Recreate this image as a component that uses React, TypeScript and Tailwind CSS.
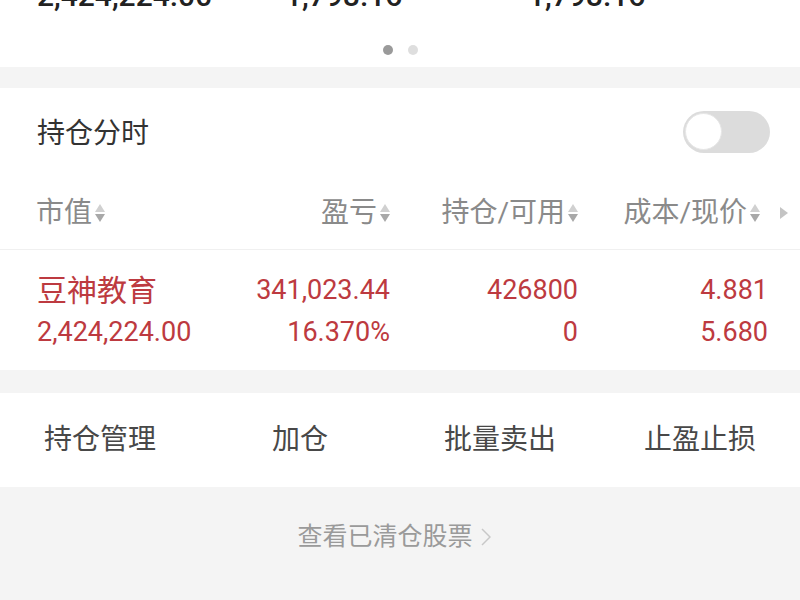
import React from "react";

const FONT = { fontFamily: "Roboto, 'Noto Sans CJK SC', sans-serif" };

function SortIcon() {
  return (
    <span className="ml-[3px] inline-flex flex-col items-center gap-[2px]">
      <svg width="10" height="8" viewBox="0 0 10 8">
        <polygon points="5,0 10,8 0,8" fill="#d0d0d0" />
      </svg>
      <svg width="10" height="8" viewBox="0 0 10 8">
        <polygon points="0,0 10,0 5,8" fill="#a8a8a8" />
      </svg>
    </span>
  );
}

export default function App() {
  return (
    <div className="w-[800px] h-[600px] overflow-hidden bg-[#f4f4f4]" style={FONT}>
      {/* top carousel card remainder */}
      <div className="h-[67px] bg-white overflow-hidden">
        <div className="-mt-[19px] flex h-[30px] items-center pl-[37px] text-[30px] leading-[30px] font-medium text-[#222]">
          <span className="w-[248px]">2,424,224.00</span>
          <span className="w-[243px]">1,798.16</span>
          <span>1,798.16</span>
        </div>
        <div className="mt-[34px] flex justify-center gap-[15px]">
          <span className="h-[10px] w-[10px] rounded-full bg-[#9a9a9a]" />
          <span className="h-[10px] w-[10px] rounded-full bg-[#dedede]" />
        </div>
      </div>

      <div className="h-[21px]" />

      {/* 持仓分时 */}
      <div className="h-[87px] bg-white flex items-center justify-between pl-[37px] pr-[30px]">
        <span className="text-[28px] leading-[28px] pt-[4px] text-[#333]">持仓分时</span>
        <div className="h-[42px] w-[87px] rounded-full bg-[#dcdcdc] flex items-center pl-[2px]">
          <div className="h-[37px] w-[37px] rounded-full bg-white border border-[#e6e6e6]" />
        </div>
      </div>

      {/* header */}
      <div className="h-[75px] bg-white flex items-center pl-[36px] pt-[2px] border-b border-[#f0f0f0] text-[28px] text-[#8a8a8a]">
        <div className="w-[166px] flex items-center">
          <span>市值</span>
          <SortIcon />
        </div>
        <div className="w-[188px] flex items-center justify-end">
          <span>盈亏</span>
          <SortIcon />
        </div>
        <div className="w-[188px] flex items-center justify-end">
          <span>持仓/可用</span>
          <SortIcon />
        </div>
        <div className="w-[182px] flex items-center justify-end">
          <span>成本/现价</span>
          <SortIcon />
        </div>
        <svg className="ml-[20px]" width="8" height="12" viewBox="0 0 8 12">
          <polygon points="0,0 8,6 0,12" fill="#c4c4c4" />
        </svg>
      </div>

      {/* data */}
      <div className="h-[120px] bg-white pt-[19px] pl-[37px] text-[#bd3a40]">
        <div className="flex h-[42px] items-center text-[27px]">
          <div className="w-[165px] text-[30px]">豆神教育</div>
          <div className="w-[188px] text-right">341,023.44</div>
          <div className="w-[188px] text-right">426800</div>
          <div className="w-[190px] text-right">4.881</div>
        </div>
        <div className="flex h-[42px] items-center text-[27px]">
          <div className="w-[165px]">2,424,224.00</div>
          <div className="w-[188px] text-right">16.370%</div>
          <div className="w-[188px] text-right">0</div>
          <div className="w-[190px] text-right">5.680</div>
        </div>
      </div>

      <div className="h-[23px]" />

      {/* actions */}
      <div className="h-[94px] bg-white grid grid-cols-4 items-center text-center text-[28px] text-[#484848]">
        <span>持仓管理</span>
        <span>加仓</span>
        <span>批量卖出</span>
        <span>止盈止损</span>
      </div>

      {/* cleared stocks */}
      <div className="h-[113px] flex items-start justify-center pt-[33px] pr-[12px] text-[25px] leading-[34px] text-[#9a9a9a]">
        <span>查看已清仓股票</span>
        <svg className="ml-[8px] mt-[8px]" width="10" height="18" viewBox="0 0 10 18">
          <polyline points="1,1 9,9 1,17" fill="none" stroke="#c8c8c8" strokeWidth="1.5" />
        </svg>
      </div>
    </div>
  );
}
